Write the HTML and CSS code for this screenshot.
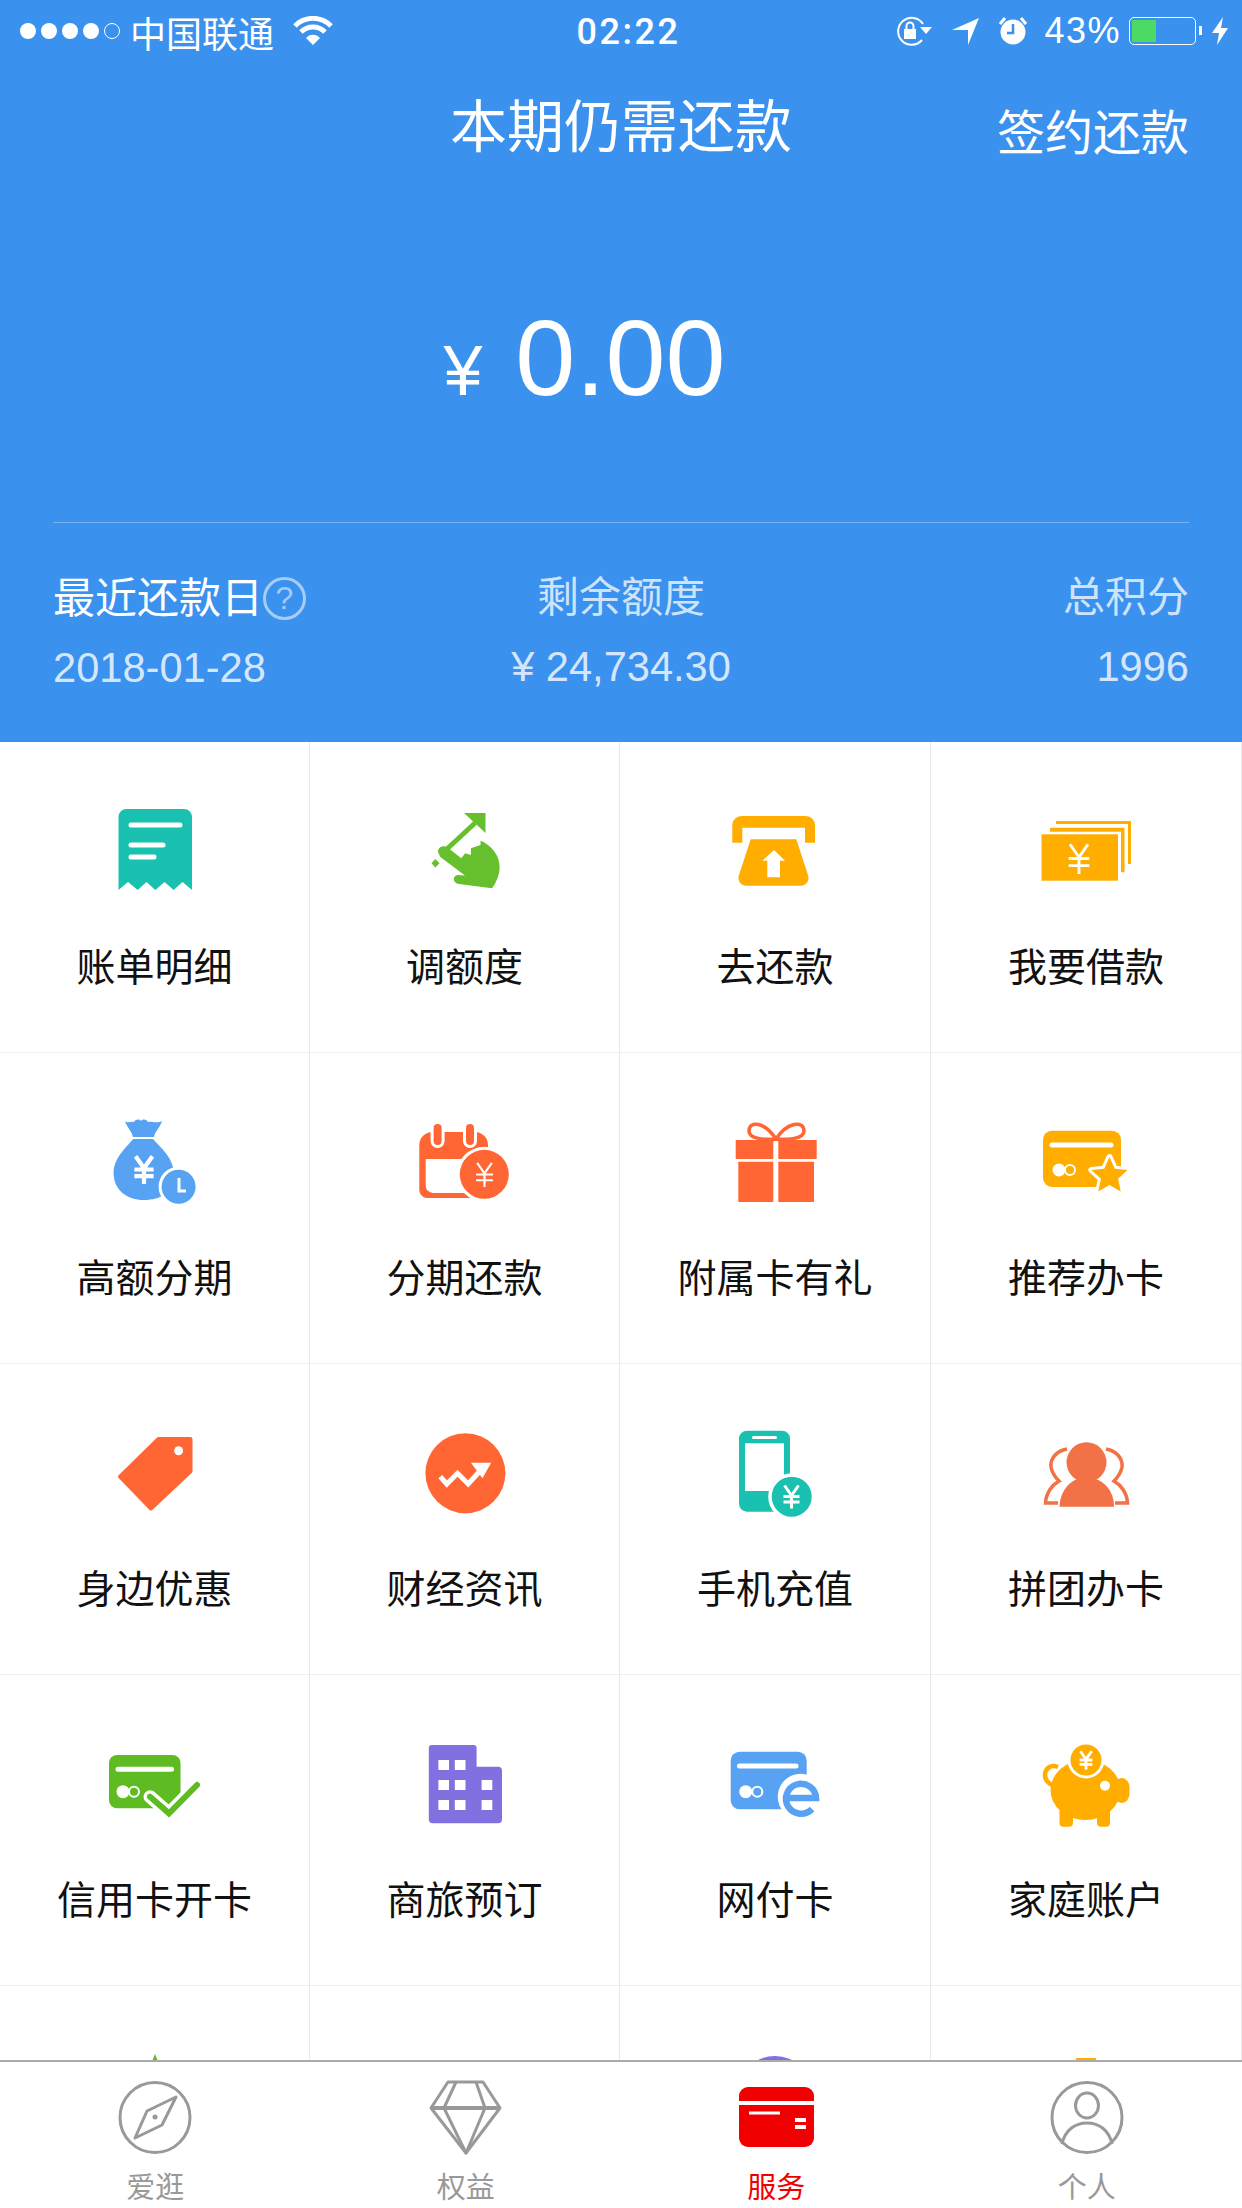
FILE: index.html
```html
<!DOCTYPE html>
<html>

<head>
    <meta charset="utf-8">
    <title>服务</title>
    <link rel="stylesheet" href="styles.css">
</head>

<body>
    <svg class="sprite">
        <symbol id="yen" viewBox="0 0 20 24">
            <path d="M3 1 10 11 17 1M2 12H18M2 17.5H18M10 11V24" fill="none" />
        </symbol>
    </svg>

    <div class="page">
        <div class="header">
            <div class="status">
                <div class="statusLeft">
                    <div class="signal"><i></i><i></i><i></i><i></i><i class="empty"></i></div>
                    <span class="carrier">中国联通</span>
                    <svg class="wifi" width="40" height="30" viewBox="0 0 40 30">
                        <path d="M2 10A25 25 0 0 1 38 10" fill="none" stroke="#fff" stroke-width="5" />
                        <path d="M8 16A17 17 0 0 1 32 16" fill="none" stroke="#fff" stroke-width="5" />
                        <path d="M13 22A9 9 0 0 1 27 22L20 29Z" fill="#fff" />
                    </svg>
                </div>
                <div class="time">02:22</div>
                <div class="statusRight">
                    <svg class="statusIcon" width="37" height="30" viewBox="0 0 37 30">
                        <path d="M27 24A13.5 13.5 0 1 1 28 8" fill="none" stroke="#fff" stroke-width="2" />
                        <path d="M25 11H37L31 18Z" fill="#fff" />
                        <rect x="9" y="13" width="12" height="10" fill="#fff" />
                        <path d="M11.5 13V10A3.5 3.5 0 0 1 18.500 10V13" fill="none" stroke="#fff" stroke-width="2" />
                    </svg>
                    <svg class="statusIcon" width="27" height="27" viewBox="0 0 27 27">
                        <path d="M27 0 16 27V12H0Z" fill="#fff" />
                    </svg>
                    <svg width="28" height="28" viewBox="0 0 28 28">
                        <circle cx="14" cy="15" r="12.500" fill="#fff" />
                        <path d="M14 7V16H8" fill="none" stroke="#3a91ee" stroke-width="2.500" />
                        <path d="M1 7 6 1M27 7 22 1" fill="none" stroke="#fff" stroke-width="3" />
                    </svg>
                    <span class="percent">43%</span>
                    <div class="battery"><div class="batteryFill"></div></div>
                    <svg class="bolt" width="16" height="28" viewBox="0 0 16 28">
                        <path d="M11 0 0 16H7L5 28 16 11H9Z" fill="#fff" />
                    </svg>
                </div>
            </div>

            <div class="titleRow">
                <div></div>
                <div class="title">本期仍需还款</div>
                <div class="action">签约还款</div>
            </div>

            <div class="amount">
                <span class="currency">¥</span>
                <span class="money">0.00</span>
            </div>

            <div class="divider"></div>

            <div class="stats">
                <div class="stat">
                    <div class="statLabel strong">最近还款日<span class="help">?</span></div>
                    <div class="statValue">2018-01-28</div>
                </div>
                <div class="stat center">
                    <div class="statLabel">剩余额度</div>
                    <div class="statValue">¥ 24,734.30</div>
                </div>
                <div class="stat right">
                    <div class="statLabel">总积分</div>
                    <div class="statValue">1996</div>
                </div>
            </div>
        </div>

        <div class="content">
            <div class="grid">
                <div class="cell">
                    <svg class="icon" viewBox="0 0 120 120">
                        <path d="M23.500 28A8 8 0 0 1 31.500 20H89A8 8 0 0 1 97 28V101L87.500 93 78.700 101 69.500 93 60.300 101 51.500 93 42.700 101 33 93 23.500 101Z" fill="#1ac1b1" />
                        <path d="M36 36H85M36 56H68M36 68H59" stroke="#fff" stroke-width="5" stroke-linecap="round" />
                    </svg>
                    <span class="label">账单明细</span>
                </div>
                <div class="cell">
                    <svg class="icon" viewBox="0 0 120 120">
                        <path d="M59 24H80.500V44Z" fill="#66bf2c" />
                        <path d="M70 34 42 60" stroke="#66bf2c" stroke-width="5" />
                        <path d="M33 63C33 58 38 56 42 58L56.300 69.300 60.100 64.300 65.900 66V59.300L75.500 56V51.700C86 56 94.600 66 94.600 77.700 94.600 86 91 94 87 99.300L54 95C48 94 47 88 52 86L60 86.500 35.300 68Z" fill="#66bf2c" />
                        <path d="M30.300 70 34.500 74.300 30.300 78.500 26.500 74.300Z" fill="#66bf2c" />
                    </svg>
                    <span class="label">调额度</span>
                </div>
                <div class="cell">
                    <svg class="icon" viewBox="0 0 120 120">
                        <path d="M17.300 53.700V36A9 9 0 0 1 26.300 27H91A9 9 0 0 1 100 36V53.700H90V38.700H27.300V53.700Z" fill="#ffae00" />
                        <path d="M35.700 50.300H81.300L93 86C95 92 91 96.700 86 96.700H31C26 96.700 22 92 24 86Z" fill="#ffae00" />
                        <path d="M59 61 70 71.700H65V88.300H52.300V71.700H47.300Z" fill="#fff" />
                    </svg>
                    <span class="label">去还款</span>
                </div>
                <div class="cell">
                    <svg class="icon" viewBox="0 0 120 120">
                        <path d="M30 32H105V75H102V35H30Z" fill="#ffae00" />
                        <path d="M24 38.700H98.500V83.300H95V42.700H24Z" fill="#ffae00" />
                        <rect x="15.500" y="45.300" width="76.500" height="46.400" fill="#ffae00" />
                        <use href="#yen" x="40" y="54" width="26" height="31" stroke="#fff" stroke-width="2.200" />
                    </svg>
                    <span class="label">我要借款</span>
                </div>

                <div class="cell">
                    <svg class="icon" viewBox="0 0 120 120">
                        <path d="M30 21C33 24 36 21 39 22 41 19 44 19 46 21 48 19 51 19 53 22 56 21 62 24 67 21 65 28 60 31 59 37H38C37 31 32 28 30 21Z" fill="#57a2f2" />
                        <path d="M38 39H58C66 48 79 58 79 75 79 92 66 100 49 100 32 100 18.600 90 18.600 73 18.600 58 31 48 38 39Z" fill="#57a2f2" />
                        <use href="#yen" x="37" y="54" width="24" height="31" stroke="#fff" stroke-width="3.500" />
                        <circle cx="83.600" cy="86.700" r="20" fill="#fff" />
                        <circle cx="83.600" cy="86.700" r="17" fill="#57a2f2" />
                        <path d="M84 78V91H91" fill="none" stroke="#fff" stroke-width="3" />
                    </svg>
                    <span class="label">高额分期</span>
                </div>
                <div class="cell">
                    <svg class="icon" viewBox="0 0 120 120">
                        <path d="M14.300 45A13 13 0 0 1 27.300 32H70A13 13 0 0 1 83 45V90A8 8 0 0 1 75 98H22.300A8 8 0 0 1 14.300 90Z" fill="#ff6633" />
                        <path d="M20.700 59H78V93H28A7.300 7.300 0 0 1 20.700 85.700Z" fill="#fff" />
                        <path d="M32.600 28V41M65 28V41" stroke="#fff" stroke-width="14" stroke-linecap="round" />
                        <path d="M32.600 28V41M65 28V41" stroke="#ff6633" stroke-width="8" stroke-linecap="round" />
                        <circle cx="79.300" cy="74.300" r="27.500" fill="#fff" />
                        <circle cx="79.300" cy="74.300" r="24.500" fill="#ff6633" />
                        <use href="#yen" x="69" y="60" width="21" height="29" stroke="#fff" stroke-width="2" />
                    </svg>
                    <span class="label">分期还款</span>
                </div>
                <div class="cell">
                    <svg class="icon" viewBox="0 0 120 120">
                        <path d="M61 39C50 22 34 20 34 31 34 39 50 40 61 39 72 22 89 20 89 31 89 39 72 40 61 39Z" fill="none" stroke="#ff6633" stroke-width="3.500" />
                        <path d="M20.700 40H58.300V59H20.700ZM63.300 40H101.700V59H63.300Z" fill="#ff6633" />
                        <path d="M23.300 61.700H58.300V102H23.300ZM63.300 61.700H99V102H63.300Z" fill="#ff6633" />
                    </svg>
                    <span class="label">附属卡有礼</span>
                </div>
                <div class="cell">
                    <svg class="icon" viewBox="0 0 120 120">
                        <rect x="17" y="30.700" width="78" height="56.300" rx="9" fill="#ffae00" />
                        <path d="M26 45H85" stroke="#fff" stroke-width="5" stroke-linecap="round" />
                        <circle cx="44" cy="70" r="5" fill="none" stroke="#fff" stroke-width="2" />
                        <circle cx="33" cy="70" r="6.500" fill="#fff" />
                        <path d="M83.500 57 88.800 68.700 101.600 70.100 92.060 78.800 94.700 91.400 83.500 85 72.300 91.400 74.900 78.800 65.400 70.100 78.200 68.700Z" fill="#ffae00" stroke="#fff" stroke-width="6" stroke-linejoin="round" paint-order="stroke" />
                    </svg>
                    <span class="label">推荐办卡</span>
                </div>

                <div class="cell">
                    <svg class="icon" viewBox="0 0 120 120">
                        <path d="M63.500 28H95.500V60.200L56 97.500 25 65.700Z" fill="#ff6633" stroke="#ff6633" stroke-width="4" stroke-linejoin="round" />
                        <circle cx="83.600" cy="39.700" r="4.500" fill="#fff" />
                    </svg>
                    <span class="label">身边优惠</span>
                </div>
                <div class="cell">
                    <svg class="icon" viewBox="0 0 120 120">
                        <circle cx="60.400" cy="62.300" r="40" fill="#ff6633" />
                        <path d="M35.300 65.700 41.800 73 52.500 62.300 63.200 73 75 60" fill="none" stroke="#fff" stroke-width="5" />
                        <path d="M65.900 51.700H86.200L77.400 67.300Z" fill="#fff" />
                    </svg>
                    <span class="label">财经资讯</span>
                </div>
                <div class="cell">
                    <svg class="icon" viewBox="0 0 120 120">
                        <rect x="24" y="19.700" width="51" height="81" rx="8" fill="#1ac1b1" />
                        <rect x="30" y="32.300" width="39" height="47.700" fill="#fff" />
                        <path d="M38.500 26.500H60.500" stroke="#fff" stroke-width="3" stroke-linecap="round" />
                        <circle cx="76.700" cy="85.700" r="23.500" fill="#fff" />
                        <circle cx="76.700" cy="85.700" r="20" fill="#1ac1b1" />
                        <use href="#yen" x="66.500" y="73" width="20" height="25" stroke="#fff" stroke-width="3" />
                    </svg>
                    <span class="label">手机充值</span>
                </div>
                <div class="cell">
                    <svg class="icon" viewBox="0 0 120 120">
                        <path d="M41 38C30 40 24 48 25 56 26 62 29 66 33 70 26 74 20 82 19.500 92H32M80 38C91 40 97 48 96 56 95 62 92 66 88 70 95 74 101 82 101.500 92H89" fill="none" stroke="#f27146" stroke-width="3.500" />
                        <path d="M33.500 95.700C34 80 44 70 52 68H69C78 70 88 80 88 95.700Z" fill="#f27146" />
                        <circle cx="60.500" cy="51.300" r="20" fill="#f27146" />
                    </svg>
                    <span class="label">拼团办卡</span>
                </div>

                <div class="cell">
                    <svg class="icon" viewBox="0 0 120 120">
                        <rect x="14" y="33" width="71.500" height="53.300" rx="8" fill="#5fbb22" />
                        <path d="M23 47.300H76.500" stroke="#fff" stroke-width="5" stroke-linecap="round" />
                        <circle cx="39" cy="69.700" r="5" fill="none" stroke="#fff" stroke-width="2" />
                        <circle cx="28" cy="69.700" r="6.500" fill="#fff" />
                        <path d="M55 74.700 74 91.300 102 63" fill="none" stroke="#fff" stroke-width="13" stroke-linecap="round" />
                        <path d="M55 74.700 74 91.300 102 63" fill="none" stroke="#5fbb22" stroke-width="6" stroke-linecap="round" />
                    </svg>
                    <span class="label">信用卡开卡</span>
                </div>
                <div class="cell">
                    <svg class="icon" viewBox="0 0 120 120">
                        <path d="M23.800 26A3 3 0 0 1 26.800 23H68.600A3 3 0 0 1 71.600 26V44.700H93A4 4 0 0 1 97 48.700V97.300A4 4 0 0 1 93 101.300H27.800A4 4 0 0 1 23.800 97.300Z" fill="#8070e0" />
                        <path d="M33.400 38H44V48H33.400ZM49.800 38H60.500V48H49.800ZM33.400 58H44V68H33.400ZM49.800 58H60.500V68H49.800ZM76.600 58H87.300V68H76.600ZM33.400 78H44V88H33.400ZM49.800 78H60.500V88H49.800ZM76.600 78H87.300V88H76.600Z" fill="#fff" />
                    </svg>
                    <span class="label">商旅预订</span>
                </div>
                <div class="cell">
                    <svg class="icon" viewBox="0 0 120 120">
                        <rect x="15.700" y="29.700" width="76" height="57.600" rx="9" fill="#57a2f2" />
                        <path d="M24.500 44H81" stroke="#fff" stroke-width="5" stroke-linecap="round" />
                        <circle cx="42.300" cy="69.700" r="5" fill="none" stroke="#fff" stroke-width="2" />
                        <circle cx="30.700" cy="69.700" r="6.500" fill="#fff" />
                        <circle cx="85.700" cy="74.700" r="23" fill="#fff" />
                        <path d="M71 76H101A15 15 0 1 0 97 87" fill="none" stroke="#57a2f2" stroke-width="6.500" />
                    </svg>
                    <span class="label">网付卡</span>
                </div>
                <div class="cell">
                    <svg class="icon" viewBox="0 0 120 120">
                        <path d="M32 45C24 42 19 47 19 53 19 58 22 61 26 63" fill="none" stroke="#ffae00" stroke-width="4.500" />
                        <ellipse cx="59.500" cy="68" rx="35" ry="30" fill="#ffae00" />
                        <rect x="88" y="56" width="15.500" height="25" rx="9" fill="#ffae00" />
                        <rect x="33.500" y="85" width="13.500" height="19.700" rx="4" fill="#ffae00" />
                        <rect x="71" y="85" width="13" height="19.700" rx="4" fill="#ffae00" />
                        <circle cx="79" cy="63.700" r="5" fill="#fff" />
                        <circle cx="60" cy="38" r="18.500" fill="#fff" />
                        <circle cx="60" cy="38" r="15.500" fill="#ffae00" />
                        <use href="#yen" x="52" y="28" width="16" height="20" stroke="#fff" stroke-width="3.500" />
                    </svg>
                    <span class="label">家庭账户</span>
                </div>

                <div class="cell">
                    <svg class="icon" viewBox="0 0 120 120">
                        <path d="M60 21 72 50H48Z" fill="#5fbb22" />
                    </svg>
                </div>
                <div class="cell"></div>
                <div class="cell">
                    <svg class="icon" viewBox="0 0 120 120">
                        <circle cx="60" cy="60" r="37" fill="#8070e0" />
                    </svg>
                </div>
                <div class="cell">
                    <svg class="icon" viewBox="0 0 120 120">
                        <rect x="50" y="25" width="20" height="30" fill="#ffae00" />
                    </svg>
                </div>
            </div>
        </div>

        <div class="tabbar">
            <div class="tab">
                <svg class="tabIcon" viewBox="0 0 80 80">
                    <circle cx="40" cy="39.500" r="35" fill="none" stroke="#999" stroke-width="3" />
                    <path d="M61 19 47 47 20 60 32 33Z" fill="none" stroke="#999" stroke-width="3" stroke-linejoin="round" />
                    <circle cx="40" cy="39" r="2.500" fill="#999" />
                </svg>
                <span class="tabLabel">爱逛</span>
            </div>
            <div class="tab">
                <svg class="tabIcon" viewBox="0 0 80 80">
                    <path d="M22 4H57L74 30 40 75 5 30Z" fill="none" stroke="#999" stroke-width="3" stroke-linejoin="round" />
                    <path d="M30 4 18 30 40 75 59 30 50 4" fill="none" stroke="#999" stroke-width="3" stroke-linejoin="round" />
                    <path d="M5 30H74" stroke="#999" stroke-width="4" />
                </svg>
                <span class="tabLabel">权益</span>
            </div>
            <div class="tab active">
                <svg class="tabIcon" viewBox="0 0 80 80">
                    <rect x="3" y="9" width="75" height="60" rx="9" fill="#f00000" />
                    <path d="M3 25H78" stroke="#fff" stroke-width="4" />
                    <path d="M13 35H44" stroke="#fff" stroke-width="3" />
                    <path d="M59 42H70M59 49H70" stroke="#fff" stroke-width="4" />
                </svg>
                <span class="tabLabel">服务</span>
            </div>
            <div class="tab">
                <svg class="tabIcon" viewBox="0 0 80 80">
                    <circle cx="40" cy="39.500" r="35" fill="none" stroke="#999" stroke-width="3" />
                    <ellipse cx="40" cy="27.500" rx="11.500" ry="12.500" fill="none" stroke="#999" stroke-width="3" />
                    <path d="M15 66C18 52 28 45 40 45 52 45 62 52 65 66" fill="none" stroke="#999" stroke-width="3" />
                </svg>
                <span class="tabLabel">个人</span>
            </div>
        </div>
    </div>
</body>

</html>
```

FILE: styles.css
```css
body {
    margin: 0;
    font-family: "Liberation Sans", "Noto Sans CJK SC", sans-serif;
    color: #111;
    background-color: #fff;
}

.sprite {
    display: none;
}

.page {
    display: flex;
    flex-direction: column;
    height: 2208px;
    overflow: hidden;
}

/* blue part on top */
.header {
    flex: none;
    height: 742px;
    overflow: hidden;
    background-color: #3a91ee;
    color: #fff;
}

.status {
    display: grid;
    grid-template-columns: 1fr auto 1fr;
    align-items: center;
    height: 60px;
    padding: 0 14px 0 20px;
    margin-bottom: 27px;
}

.statusLeft {
    display: flex;
    align-items: center;
}

.statusRight {
    display: flex;
    align-items: center;
    justify-content: flex-end;
    gap: 17px;
}

.statusIcon {
    margin-right: 3px;
}

.signal {
    display: flex;
    gap: 5px;
    margin-right: 10px;
}

.signal i {
    width: 16px;
    height: 16px;
    border-radius: 50%;
    background-color: #fff;
}

.signal i.empty {
    box-sizing: border-box;
    background-color: transparent;
    border: 1.5px solid #fff;
}

.carrier {
    font-size: 36px;
    font-family: "Noto Sans CJK SC", sans-serif;
    line-height: 60px;
    padding-top: 2px;
}

.wifi {
    margin-left: 19px;
}

.time {
    font-family: Roboto, sans-serif;
    font-size: 36px;
    font-weight: 500;
    letter-spacing: 2.500px;
    padding: 2px 0 0 9px;
}

.percent {
    font-size: 36px;
    letter-spacing: 1.500px;
}

.battery {
    box-sizing: border-box;
    position: relative;
    width: 67px;
    height: 28px;
    padding: 2px;
    margin-left: -9px;
    border: 1.500px solid #fff;
    border-radius: 5px;
}

.battery::after {
    content: "";
    position: absolute;
    top: 8px;
    right: -7px;
    width: 3px;
    height: 9px;
    background-color: #fff;
}

.batteryFill {
    width: 40%;
    height: 100%;
    background-color: #4cd964;
}

.bolt {
    margin-left: -1px;
}

.titleRow {
    display: grid;
    grid-template-columns: 1fr auto 1fr;
    height: 70px;
    padding: 0 53px;
    font-family: "Noto Sans CJK SC", sans-serif;
}

.title {
    font-size: 57px;
    line-height: 70px;
}

.action {
    font-size: 48px;
    line-height: 70px;
    padding-top: 7px;
    text-align: right;
}

.amount {
    box-sizing: border-box;
    display: flex;
    align-items: baseline;
    justify-content: center;
    gap: 33px;
    height: 365px;
    padding: 147px 73px 0 0;
}

.currency {
    font-size: 70px;
    line-height: 1;
}

.money {
    font-size: 108px;
    line-height: 1;
}

.divider {
    height: 1px;
    margin: 0 53px;
    background-color: rgba(255, 255, 255, 0.3);
}

.stats {
    display: grid;
    grid-template-columns: 1fr 1fr 1fr;
    padding: 46px 53px 0;
}

.stat {
    display: flex;
    flex-direction: column;
    gap: 23px;
}

.center {
    text-align: center;
}

.right {
    text-align: right;
}

.statLabel {
    font-family: "Noto Sans CJK SC", sans-serif;
    font-size: 42px;
    line-height: 50px;
    color: rgba(255, 255, 255, 0.75);
}

.strong {
    display: flex;
    align-items: center;
    color: #fff;
}

.help {
    box-sizing: border-box;
    display: inline-block;
    width: 43px;
    height: 43px;
    margin: 8px 0 0 0;
    border: 3.500px solid rgba(255, 255, 255, 0.55);
    border-radius: 50%;
    color: rgba(255, 255, 255, 0.55);
    font-family: "Liberation Sans", sans-serif;
    font-size: 32px;
    line-height: 36px;
    text-align: center;
}

.statValue {
    font-size: 41.600px;
    line-height: 50px;
    color: rgba(255, 255, 255, 0.8);
}

/* service grid, cut off by the tab bar */
.content {
    flex: 1;
    min-height: 0;
    overflow: hidden;
}

.grid {
    display: grid;
    grid-template-columns: 310px 310px 311px 311px;
    grid-auto-rows: 311px;
}

.cell {
    box-sizing: border-box;
    display: flex;
    flex-direction: column;
    align-items: center;
    padding-top: 47px;
    border-right: 1px solid #e8e8e8;
    border-bottom: 1px solid #eee;
}

.icon {
    flex: none;
    width: 120px;
    height: 120px;
}

.label {
    margin-top: 30px;
    font-family: "Noto Sans CJK SC", sans-serif;
    font-size: 39px;
    line-height: 50px;
    color: #111;
}

.tabbar {
    flex: none;
    display: grid;
    grid-template-columns: repeat(4, 1fr);
    height: 148px;
    box-sizing: border-box;
    border-top: 2px solid #aaa;
    background-color: #fff;
}

.tab {
    display: flex;
    flex-direction: column;
    align-items: center;
    padding-top: 16px;
}

.tabIcon {
    flex: none;
    width: 80px;
    height: 80px;
}

.tabLabel {
    margin-top: 9px;
    font-family: "Noto Sans CJK SC", sans-serif;
    font-size: 29px;
    line-height: 36px;
    color: #999;
}

.active .tabLabel {
    color: #f00000;
}
```
